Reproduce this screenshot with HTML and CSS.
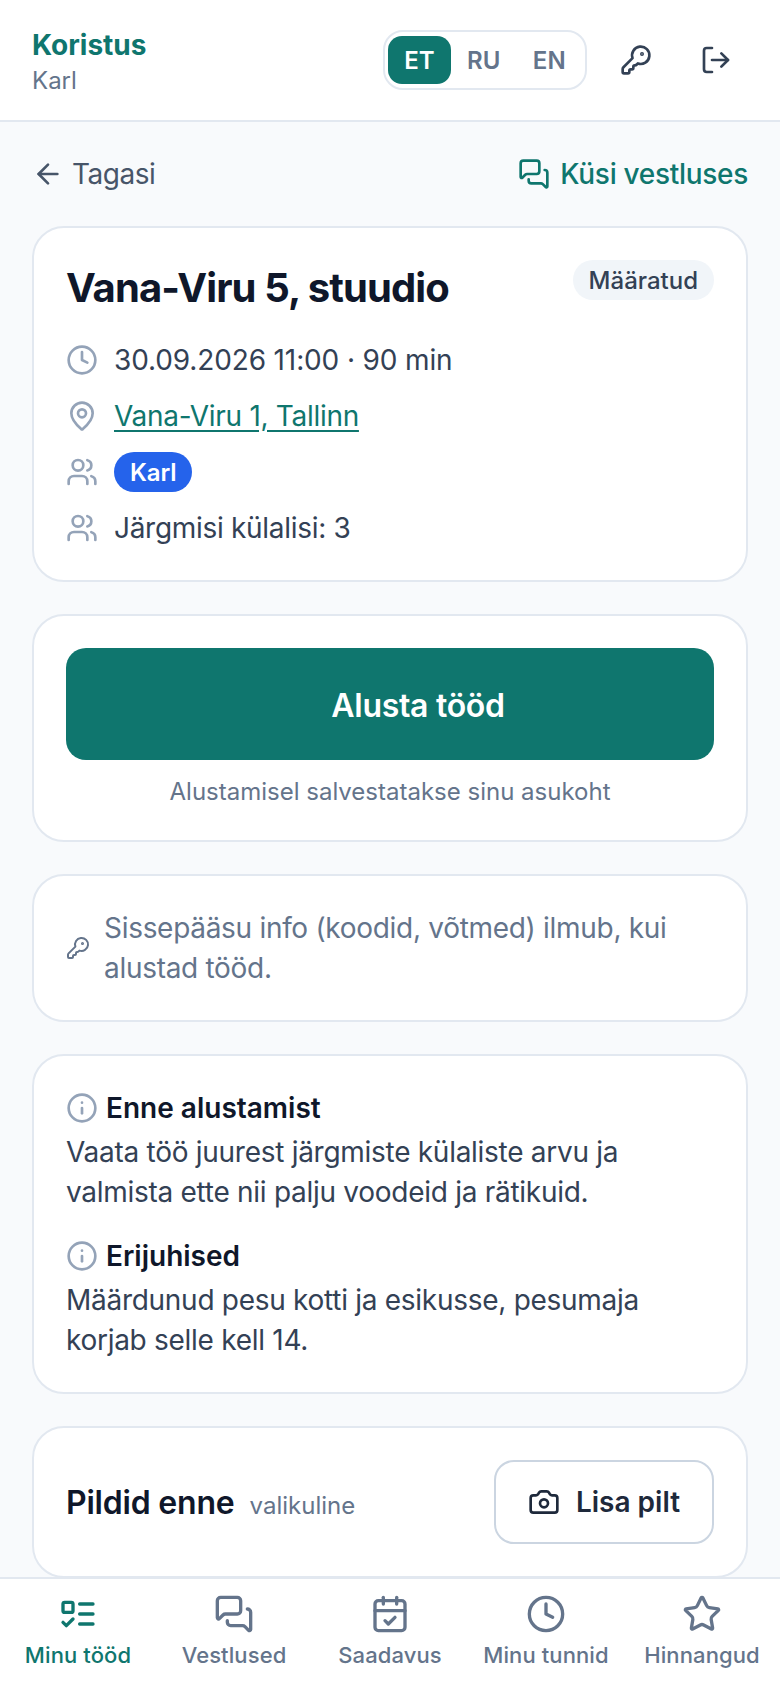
FILE: index.html
```html
<!DOCTYPE html>
<html lang="et">
<head>
<meta charset="utf-8">
<title>Koristus</title>
<link rel="stylesheet" href="styles.css">
</head>
<body>
<svg class="defs" aria-hidden="true">
  <symbol id="i-key" viewBox="0 0 24 24"><path d="M2.586 17.414A2 2 0 0 0 2 18.828V21a1 1 0 0 0 1 1h3a1 1 0 0 0 1-1v-1a1 1 0 0 1 1-1h1a1 1 0 0 0 1-1v-1a1 1 0 0 1 1-1h.172a2 2 0 0 0 1.414-.586l.814-.814a6.5 6.5 0 1 0-4-4z"/><circle cx="16.5" cy="7.5" r=".5" fill="currentColor"/></symbol>
  <symbol id="i-logout" viewBox="0 0 24 24"><path d="m16 17 5-5-5-5"/><path d="M21 12H9"/><path d="M9 21H5a2 2 0 0 1-2-2V5a2 2 0 0 1 2-2h4"/></symbol>
  <symbol id="i-back" viewBox="0 0 24 24"><path d="m12 19-7-7 7-7"/><path d="M19 12H5"/></symbol>
  <symbol id="i-chat" viewBox="0 0 24 24"><path d="M16 10a2 2 0 0 1-2 2H6.828a2 2 0 0 0-1.414.586l-2.202 2.202A.71.71 0 0 1 2 14.286V4a2 2 0 0 1 2-2h10a2 2 0 0 1 2 2z"/><path d="M20 9a2 2 0 0 1 2 2v10.286a.71.71 0 0 1-1.212.502l-2.202-2.202A2 2 0 0 0 17.172 19H10a2 2 0 0 1-2-2v-1"/></symbol>
  <symbol id="i-clock" viewBox="0 0 24 24"><circle cx="12" cy="12" r="10"/><path d="M12 6v6l4 2"/></symbol>
  <symbol id="i-pin" viewBox="0 0 24 24"><path d="M20 10c0 4.993-5.539 10.193-7.399 11.799a1 1 0 0 1-1.202 0C9.539 20.193 4 14.993 4 10a8 8 0 0 1 16 0"/><circle cx="12" cy="10" r="3"/></symbol>
  <symbol id="i-users" viewBox="0 0 24 24"><path d="M16 21v-2a4 4 0 0 0-4-4H6a4 4 0 0 0-4 4v2"/><circle cx="9" cy="7" r="4"/><path d="M22 21v-2a4 4 0 0 0-3-3.87"/><path d="M16 3.128a4 4 0 0 1 0 7.75"/></symbol>
  <symbol id="i-info" viewBox="0 0 24 24"><circle cx="12" cy="12" r="10"/><path d="M12 16v-4"/><path d="M12 8h.01"/></symbol>
  <symbol id="i-camera" viewBox="0 0 24 24"><path d="M13.997 4a2 2 0 0 1 1.76 1.05l.486.9A2 2 0 0 0 18.003 7H20a2 2 0 0 1 2 2v9a2 2 0 0 1-2 2H4a2 2 0 0 1-2-2V9a2 2 0 0 1 2-2h1.997a2 2 0 0 0 1.759-1.048l.489-.904A2 2 0 0 1 10.004 4z"/><circle cx="12" cy="13" r="3"/></symbol>
  <symbol id="i-list" viewBox="0 0 24 24"><rect x="3" y="5" width="6" height="6" rx="1"/><path d="m3 17 2 2 4-4"/><path d="M13 6h8"/><path d="M13 12h8"/><path d="M13 18h8"/></symbol>
  <symbol id="i-cal" viewBox="0 0 24 24"><path d="M8 2v4"/><path d="M16 2v4"/><rect x="3" y="4" width="18" height="18" rx="2"/><path d="M3 10h18"/><path d="m9 16 2 2 4-4"/></symbol>
  <symbol id="i-star" viewBox="0 0 24 24"><path d="M11.525 2.295a.53.53 0 0 1 .95 0l2.31 4.679a2.123 2.123 0 0 0 1.595 1.16l5.166.756a.53.53 0 0 1 .294.904l-3.736 3.638a2.123 2.123 0 0 0-.611 1.878l.882 5.14a.53.53 0 0 1-.771.56l-4.618-2.428a2.122 2.122 0 0 0-1.973 0L6.396 21.01a.53.53 0 0 1-.77-.56l.881-5.139a2.122 2.122 0 0 0-.611-1.879L2.16 9.795a.53.53 0 0 1 .294-.906l5.165-.755a2.122 2.122 0 0 0 1.597-1.16z"/></symbol>
</svg>

<div class="app">
  <header class="topbar">
    <div class="brand">
      <div class="brand-name">Koristus</div>
      <div class="brand-user">Karl</div>
    </div>
    <div class="top-actions">
      <div class="lang">
        <span class="lang-item is-active">ET</span>
        <span class="lang-item">RU</span>
        <span class="lang-item">EN</span>
      </div>
      <span class="top-btn"><svg class="icon i32"><use href="#i-key"/></svg></span>
      <span class="top-btn"><svg class="icon i32"><use href="#i-logout"/></svg></span>
    </div>
  </header>

  <main class="content">
    <div class="subnav">
      <a class="back"><svg class="icon i32"><use href="#i-back"/></svg>Tagasi</a>
      <a class="ask"><svg class="icon i32"><use href="#i-chat"/></svg>Küsi vestluses</a>
    </div>

    <section class="card">
      <div class="title-row">
        <h1 class="title">Vana-Viru 5, stuudio</h1>
        <span class="badge">Määratud</span>
      </div>
      <ul class="facts">
        <li class="fact fact-time"><svg class="icon i32 muted"><use href="#i-clock"/></svg>30.09.2026 11:00 · 90 min</li>
        <li class="fact"><svg class="icon i32 muted"><use href="#i-pin"/></svg><a class="addr">Vana-Viru 1, Tallinn</a></li>
        <li class="fact"><svg class="icon i32 muted"><use href="#i-users"/></svg><span class="pill">Karl</span></li>
        <li class="fact"><svg class="icon i32 muted"><use href="#i-users"/></svg>Järgmisi külalisi: 3</li>
      </ul>
    </section>

    <section class="card">
      <button class="primary">Alusta tööd</button>
      <p class="hint">Alustamisel salvestatakse sinu asukoht</p>
    </section>

    <section class="card access">
      <svg class="icon i24"><use href="#i-key"/></svg>
      <p class="access-text">Sissepääsu info (koodid, võtmed) ilmub, kui alustad tööd.</p>
    </section>

    <section class="card notes">
      <div class="note">
        <h2 class="note-head"><svg class="icon i32 muted"><use href="#i-info"/></svg>Enne alustamist</h2>
        <p class="note-body">Vaata töö juurest järgmiste külaliste arvu ja valmista ette nii palju voodeid ja rätikuid.</p>
      </div>
      <div class="note">
        <h2 class="note-head"><svg class="icon i32 muted"><use href="#i-info"/></svg>Erijuhised</h2>
        <p class="note-body">Määrdunud pesu kotti ja esikusse, pesumaja korjab selle kell 14.</p>
      </div>
    </section>

    <section class="card photos">
      <div class="photos-label">
        <span class="photos-title">Pildid enne</span>
        <span class="photos-opt">valikuline</span>
      </div>
      <button class="outline"><svg class="icon i32"><use href="#i-camera"/></svg>Lisa pilt</button>
    </section>
  </main>

  <nav class="tabs">
    <a class="tab is-active"><svg class="icon i40"><use href="#i-list"/></svg>Minu tööd</a>
    <a class="tab"><svg class="icon i40"><use href="#i-chat"/></svg>Vestlused</a>
    <a class="tab"><svg class="icon i40"><use href="#i-cal"/></svg>Saadavus</a>
    <a class="tab"><svg class="icon i40"><use href="#i-clock"/></svg>Minu tunnid</a>
    <a class="tab"><svg class="icon i40"><use href="#i-star"/></svg>Hinnangud</a>
  </nav>
</div>
</body>
</html>
```

FILE: styles.css
```css
* { box-sizing: border-box; }
html, body { margin: 0; padding: 0; }
body {
  font-family: Inter, "Liberation Sans", sans-serif;
  color: #0f172a;
  background: #f8fafc;
  overflow: hidden;
}
.defs { display: none; }
h1, h2, p, ul { margin: 0; padding: 0; }
ul { list-style: none; }
button { font-family: inherit; cursor: pointer; }

.icon {
  fill: none;
  stroke: currentColor;
  stroke-width: 2;
  stroke-linecap: round;
  stroke-linejoin: round;
  flex: none;
  display: block;
}
.i24 { width: 24px; height: 24px; }
.i32 { width: 32px; height: 32px; }
.i40 { width: 40px; height: 40px; }
.muted { color: #94a3b8; }

.app {
  height: 1688px;
  display: flex;
  flex-direction: column;
}

.topbar {
  flex: none;
  height: 122px;
  padding: 0 32px;
  background: #fff;
  border-bottom: 2px solid #e2e8f0;
  display: flex;
  align-items: center;
  justify-content: space-between;
}
.brand { padding-top: 5px; }
.brand-name { font-size: 28px; line-height: 36px; font-weight: 700; color: #0f766e; }
.brand-user { font-size: 24px; line-height: 36px; color: #64748b; }
.top-actions { display: flex; align-items: center; gap: 16px; color: #334155; }
.lang {
  display: flex;
  margin-right: 1px;
  padding: 4px 3px;
  border: 2px solid #e2e8f0;
  border-radius: 20px;
  background: #fff;
}
.lang-item {
  width: 65.5px;
  height: 48px;
  display: flex;
  align-items: center;
  justify-content: center;
  font-size: 24px;
  font-weight: 600;
  color: #64748b;
  border-radius: 14px;
}
.lang-item.is-active { width: 63px; background: #0f766e; color: #fff; }
.top-btn {
  width: 64px;
  height: 64px;
  display: flex;
  align-items: center;
  justify-content: center;
}

.content {
  flex: 1 1 0;
  min-height: 0;
  overflow: hidden;
  padding: 32px 32px 0;
  display: flex;
  flex-direction: column;
  gap: 32px;
}
.content > * { flex: none; }

.subnav {
  height: 40px;
  display: flex;
  align-items: center;
  justify-content: space-between;
  font-size: 28px;
}
.back { display: flex; align-items: center; gap: 8px; color: #475569; letter-spacing: -0.5px; }
.ask { display: flex; align-items: center; gap: 10px; color: #0f766e; font-weight: 500; letter-spacing: -0.3px; }

.card {
  background: #fff;
  border: 2px solid #e2e8f0;
  border-radius: 32px;
  padding: 32px;
}

.title-row { display: flex; align-items: flex-start; justify-content: space-between; gap: 16px; }
.title { font-size: 40px; line-height: 56px; font-weight: 700; letter-spacing: -0.9px; }
.badge {
  height: 40px;
  padding: 0 16px;
  display: flex;
  align-items: center;
  border-radius: 20px;
  background: #f1f5f9;
  color: #334155;
  font-size: 24px;
  font-weight: 500;
}
.facts { margin-top: 24px; display: flex; flex-direction: column; gap: 16px; }
.fact {
  height: 40px;
  display: flex;
  align-items: center;
  gap: 16px;
  font-size: 28px;
  letter-spacing: -0.3px;
  color: #334155;
}
.fact-time { letter-spacing: -0.13px; }
.addr { color: #0f766e; text-decoration: underline; text-underline-offset: 4px; }
.pill {
  height: 40px;
  padding: 0 16px;
  display: flex;
  align-items: center;
  border-radius: 20px;
  background: #2563eb;
  color: #fff;
  font-size: 24px;
  font-weight: 600;
  letter-spacing: -0.1px;
}

.primary {
  display: block;
  width: 100%;
  height: 112px;
  padding: 2px 0 0 56px;
  border: 0;
  border-radius: 20px;
  background: #0f766e;
  color: #fff;
  font-size: 32px;
  font-weight: 600;
  letter-spacing: -0.3px;
}
.hint { margin-top: 16px; text-align: center; font-size: 24px; line-height: 32px; color: #64748b; }

.access { display: flex; align-items: center; gap: 14px; color: #64748b; }
.access-text { font-size: 28px; line-height: 40px; letter-spacing: -0.3px; }

.notes { display: flex; flex-direction: column; gap: 24px; }
.note-head {
  display: flex;
  align-items: center;
  gap: 8px;
  font-size: 28px;
  line-height: 40px;
  font-weight: 600;
  color: #0f172a;
}
.note-body { margin-top: 4px; font-size: 28px; line-height: 40px; letter-spacing: -0.28px; color: #334155; }

.photos { display: flex; align-items: center; justify-content: space-between; }
.photos-label { display: flex; align-items: baseline; gap: 15px; }
.photos-title { font-size: 32px; font-weight: 600; letter-spacing: -0.2px; }
.photos-opt { font-size: 24px; color: #64748b; }
.outline {
  width: 220px;
  height: 84px;
  display: flex;
  align-items: center;
  justify-content: center;
  gap: 16px;
  border: 2px solid #cbd5e1;
  border-radius: 20px;
  background: #fff;
  color: #1e293b;
  font-size: 28px;
  font-weight: 600;
}

.tabs {
  flex: none;
  height: 111px;
  background: #fff;
  border-top: 2px solid #e2e8f0;
  display: grid;
  grid-template-columns: repeat(5, 1fr);
  padding-top: 15px;
}
.tab {
  display: flex;
  flex-direction: column;
  align-items: center;
  gap: 6px;
  font-size: 22px;
  line-height: 30px;
  font-weight: 500;
  letter-spacing: 0.1px;
  color: #64748b;
  white-space: nowrap;
}
.tab.is-active { color: #0f766e; }
```
